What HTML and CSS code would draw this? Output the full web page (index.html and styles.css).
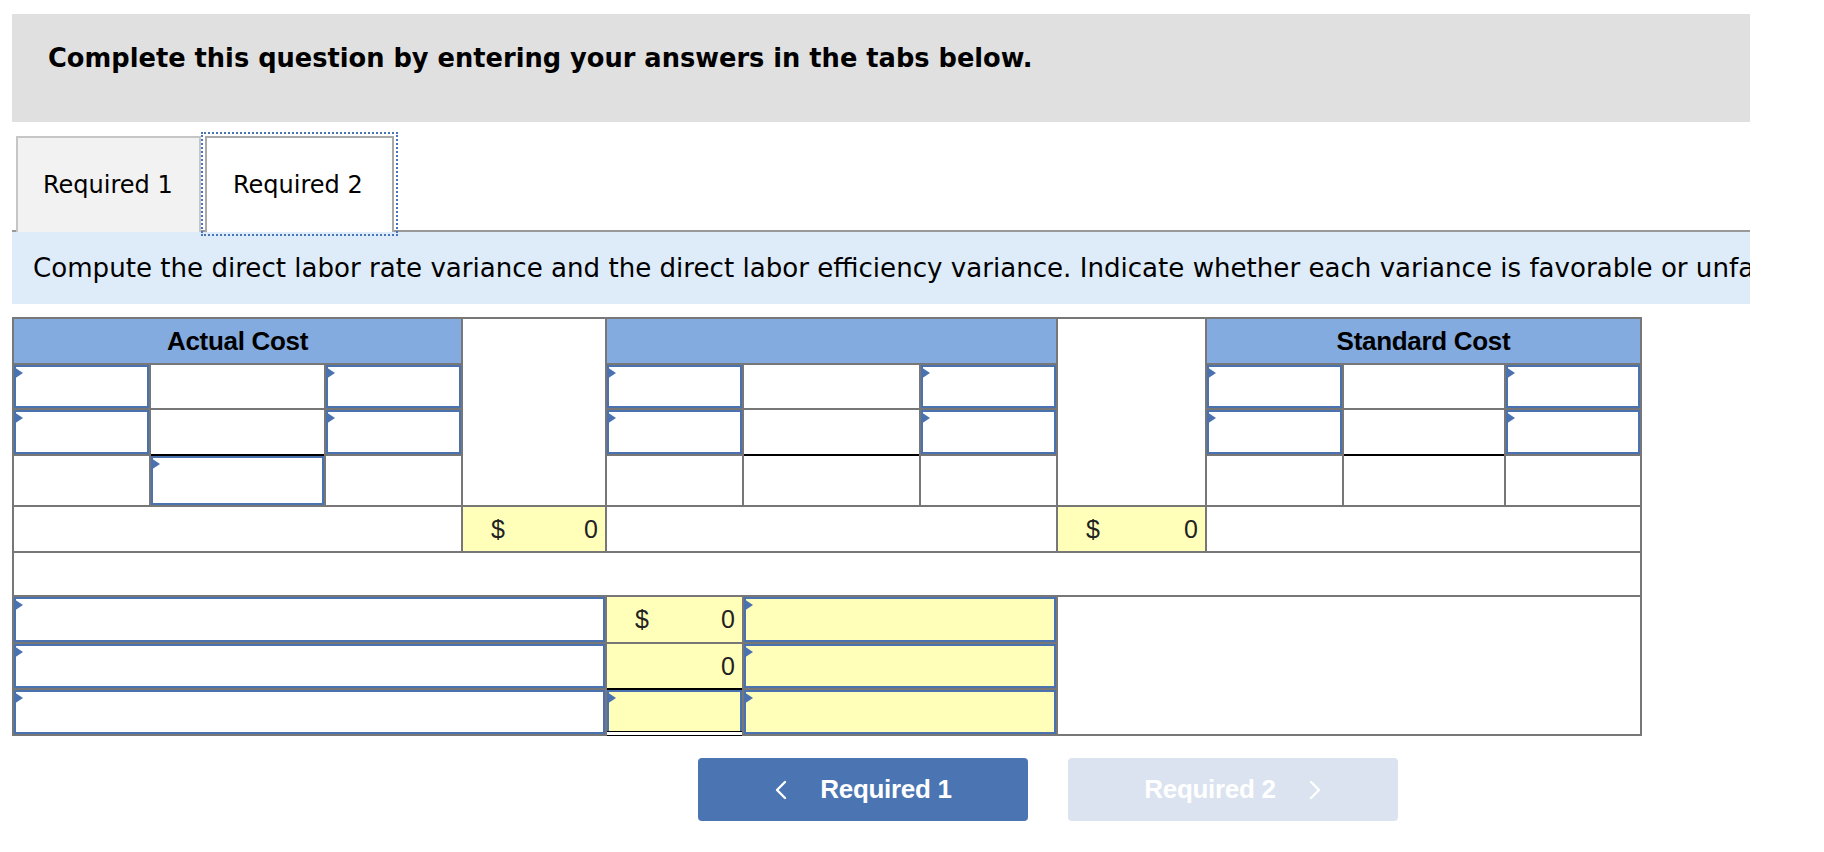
FILE: index.html
```html
<!DOCTYPE html>
<html lang="en">
<head>
<meta charset="utf-8">
<title>Required 2</title>
<link rel="stylesheet" href="styles.css">
</head>
<body>
<div class="page">
  <div class="banner"><p class="banner-text">Complete this question by entering your answers in the tabs below.</p></div>

  <div class="tabs">
    <div class="tab tab-off">Required 1</div>
    <div class="tab tab-on">Required 2</div>
  </div>

  <div class="instr"><p class="instr-text">Compute the direct labor rate variance and the direct labor efficiency variance. Indicate whether each variance is favorable or unfavorable.</p></div>

  <div class="sheet">
    <!-- header row -->
    <div class="hd c1-3 r1">Actual Cost</div>
    <div class="blank c4 r1-4"></div>
    <div class="hd c5-7 r1"></div>
    <div class="blank c8 r1-4"></div>
    <div class="hd c9-11 r1">Standard Cost</div>

    <!-- row 1 -->
    <div class="cell c1 r2"><div class="inp"></div></div>
    <div class="cell c2 r2"></div>
    <div class="cell c3 r2"><div class="inp"></div></div>
    <div class="cell c5 r2"><div class="inp"></div></div>
    <div class="cell c6 r2"></div>
    <div class="cell c7 r2"><div class="inp"></div></div>
    <div class="cell c9 r2"><div class="inp"></div></div>
    <div class="cell c10 r2"></div>
    <div class="cell c11 r2"><div class="inp"></div></div>

    <!-- row 2 -->
    <div class="cell c1 r3"><div class="inp"></div></div>
    <div class="cell c2 r3 ul"></div>
    <div class="cell c3 r3"><div class="inp"></div></div>
    <div class="cell c5 r3"><div class="inp"></div></div>
    <div class="cell c6 r3 ul"></div>
    <div class="cell c7 r3"><div class="inp"></div></div>
    <div class="cell c9 r3"><div class="inp"></div></div>
    <div class="cell c10 r3 ul"></div>
    <div class="cell c11 r3"><div class="inp"></div></div>

    <!-- row 3 -->
    <div class="cell c1 r4"></div>
    <div class="cell c2 r4"><div class="inp"></div></div>
    <div class="cell c3 r4"></div>
    <div class="cell c5 r4"></div>
    <div class="cell c6 r4"></div>
    <div class="cell c7 r4"></div>
    <div class="cell c9 r4"></div>
    <div class="cell c10 r4"></div>
    <div class="cell c11 r4"></div>

    <!-- row 4 totals -->
    <div class="cell c1-3 r5"></div>
    <div class="cell yel amt c4 r5"><span>$</span><span>0</span></div>
    <div class="cell c5-7 r5"></div>
    <div class="cell yel amt c8 r5"><span>$</span><span>0</span></div>
    <div class="cell c9-11 r5"></div>

    <!-- row 5 -->
    <div class="cell c1-11 r6"></div>

    <!-- rows 6-8 -->
    <div class="cell c1-4 r7"><div class="inp"></div></div>
    <div class="cell yel amt c5 r7"><span>$</span><span>0</span></div>
    <div class="cell yel c6-7 r7"><div class="inp"></div></div>
    <div class="blank c8-11 r7-9"></div>

    <div class="cell c1-4 r8"><div class="inp"></div></div>
    <div class="cell yel amt c5 r8 ul"><span></span><span>0</span></div>
    <div class="cell yel c6-7 r8"><div class="inp"></div></div>

    <div class="cell c1-4 r9"><div class="inp"></div></div>
    <div class="cell yel c5 r9 dul"><div class="inp"></div></div>
    <div class="cell yel c6-7 r9"><div class="inp"></div></div>
  </div>

  <div class="nav">
    <button class="btn btn-prev" type="button">
      <svg class="chev" width="14" height="22" viewBox="0 0 14 22"><polyline points="11,3 3,11 11,19" fill="none" stroke="#ffffff" stroke-width="2.4" stroke-linecap="round" stroke-linejoin="round"/></svg>
      <span>Required 1</span>
    </button>
    <button class="btn btn-next" type="button">
      <span>Required 2</span>
      <svg class="chev" width="14" height="22" viewBox="0 0 14 22"><polyline points="3,3 11,11 3,19" fill="none" stroke="#ffffff" stroke-width="2.4" stroke-linecap="round" stroke-linejoin="round"/></svg>
    </button>
  </div>
</div>
</body>
</html>
```

FILE: styles.css
```css
html, body {
  margin: 0;
  padding: 0;
  background: #ffffff;
}

.page {
  padding: 14px 0 0 12px;
  width: 1738px;
  font-family: "DejaVu Sans", Verdana, sans-serif;
  color: #000;
}

.banner {
  background: #e0e0e0;
  height: 108px;
  box-sizing: border-box;
  padding: 29px 0 0 36px;
}

.banner-text {
  margin: 0;
  font-weight: bold;
  font-size: 25.7px;
  line-height: 30px;
}

.tabs {
  display: flex;
  margin-top: 14px;
  height: 94px;
  border-bottom: 2px solid #999999;
  padding-left: 4px;
}

.tab {
  box-sizing: border-box;
  display: flex;
  align-items: center;
  font-size: 24px;
  margin-bottom: -2px;
  height: 96px;
}

.tab-off {
  width: 185px;
  background: #f2f2f2;
  border: 2px solid #c6c6c6;
  border-bottom: none;
  padding-left: 25px;
}

.tab-on {
  width: 189px;
  margin-left: 4px;
  background: #ffffff;
  border: 2px solid #a9a9a9;
  border-bottom: none;
  outline: 2px dotted #4a74b8;
  outline-offset: 2px;
  padding-left: 26px;
}

.instr {
  background: #deebf8;
  height: 72px;
  display: flex;
  align-items: center;
  overflow: hidden;
  padding-left: 21px;
}

.instr-text {
  margin: 0;
  font-size: 26.1px;
  white-space: nowrap;
}

/* worksheet grid */
.sheet {
  margin-top: 13px;
  width: max-content;
  display: grid;
  grid-template-columns: 135px 173px 135px 142px 135px 175px 135px 147px 135px 160px 134px;
  grid-template-rows: 44px 43px 44px 49px 44px 42px 45px 44px 44px;
  gap: 2px;
  padding: 2px;
  background: #777777;
  font-family: "Liberation Sans", Arial, sans-serif;
}

.sheet > div {
  background: #ffffff;
  position: relative;
  box-sizing: border-box;
}

.hd {
  background: #83abe0 !important;
  font-weight: bold;
  font-size: 26px;
  display: flex;
  align-items: center;
  justify-content: center;
  letter-spacing: -0.3px;
}

.yel { background: #ffffba !important; }

.amt {
  display: flex;
  align-items: center;
  justify-content: space-between;
  padding: 0 7px 0 28px;
  font-size: 25px;
  color: #222;
}

.inp {
  position: absolute;
  inset: 0;
  border: 2px solid #4a72b0;
}

.inp::before {
  content: "";
  position: absolute;
  left: -2px;
  top: 0;
  border-left: 9px solid #4a72b0;
  border-top: 6px solid transparent;
  border-bottom: 6px solid transparent;
}

.ul { box-shadow: 0 2px 0 #000000; }

.dul::after {
  content: "";
  position: absolute;
  left: 0;
  right: 0;
  bottom: -2px;
  height: 3px;
  border-top: 1px solid #000;
  border-bottom: 1px solid #000;
  background: #fff;
}

/* grid placement */
.c1 { grid-column: 1; }
.c2 { grid-column: 2; }
.c3 { grid-column: 3; }
.c4 { grid-column: 4; }
.c5 { grid-column: 5; }
.c6 { grid-column: 6; }
.c7 { grid-column: 7; }
.c8 { grid-column: 8; }
.c9 { grid-column: 9; }
.c10 { grid-column: 10; }
.c11 { grid-column: 11; }
.c1-3 { grid-column: 1 / 4; }
.c5-7 { grid-column: 5 / 8; }
.c9-11 { grid-column: 9 / 12; }
.c1-11 { grid-column: 1 / 12; }
.c1-4 { grid-column: 1 / 5; }
.c6-7 { grid-column: 6 / 8; }
.c8-11 { grid-column: 8 / 12; }

.r1 { grid-row: 1; }
.r2 { grid-row: 2; }
.r3 { grid-row: 3; }
.r4 { grid-row: 4; }
.r5 { grid-row: 5; }
.r6 { grid-row: 6; }
.r7 { grid-row: 7; }
.r8 { grid-row: 8; }
.r9 { grid-row: 9; }
.r1-4 { grid-row: 1 / 5; }
.r7-9 { grid-row: 7 / 10; }

/* navigation */
.nav {
  display: flex;
  gap: 40px;
  margin-top: 22px;
  padding-left: 686px;
}

.btn {
  width: 330px;
  height: 63px;
  border: none;
  border-radius: 4px;
  display: flex;
  align-items: center;
  justify-content: center;
  gap: 32px;
  font-family: "Liberation Sans", Arial, sans-serif;
  font-weight: bold;
  font-size: 26px;
  color: #ffffff;
  padding: 0;
  letter-spacing: -0.3px;
}

.btn-prev { background: #4a74b2; }
.btn-next { background: #dae3ef; }

.chev { display: block; }
```
